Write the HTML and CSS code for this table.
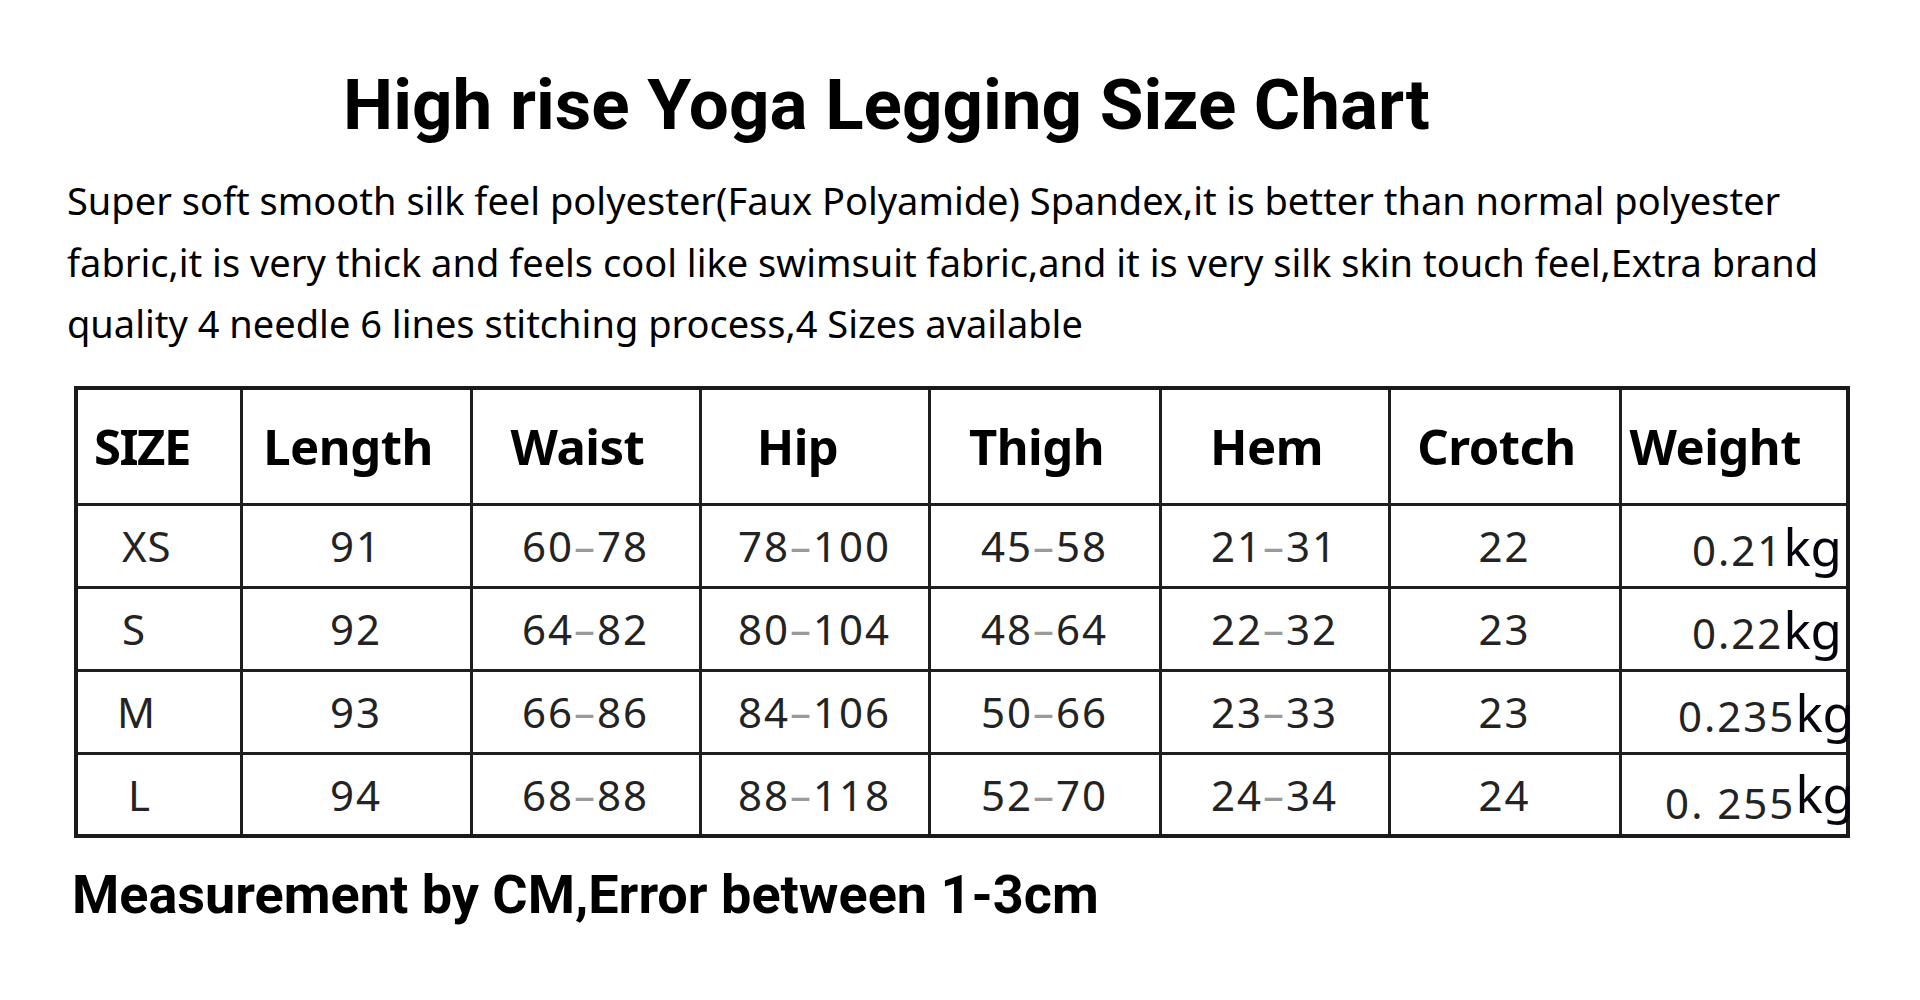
FILE: index.html
```html
<!DOCTYPE html>
<html lang="en">
<head>
<meta charset="utf-8">
<title>High rise Yoga Legging Size Chart</title>
<link rel="stylesheet" href="styles.css">
</head>
<body>
<main class="page">
  <h1 class="title">High rise Yoga Legging Size Chart</h1>
  <p class="desc">Super soft smooth silk feel polyester(Faux Polyamide) Spandex,it is better than normal polyester fabric,it is very thick and feels cool like swimsuit fabric,and it is very silk skin touch feel,Extra brand quality 4 needle 6 lines stitching process,4 Sizes available</p>
  <table class="chart">
    <colgroup>
      <col class="c-size"><col class="c-len"><col class="c-w1"><col class="c-w2"><col class="c-w3"><col class="c-w4"><col class="c-w5"><col class="c-w6">
    </colgroup>
    <thead>
      <tr class="head">
        <th class="h-size">SIZE</th>
        <th>Length</th>
        <th>Waist</th>
        <th class="h-hip">Hip</th>
        <th>Thigh</th>
        <th>Hem</th>
        <th>Crotch</th>
        <th class="h-weight">Weight</th>
      </tr>
    </thead>
    <tbody>
      <tr class="row">
        <td class="sz">XS</td>
        <td>91</td>
        <td>60<span class="d">–</span>78</td>
        <td>78<span class="d">–</span>100</td>
        <td>45<span class="d">–</span>58</td>
        <td>21<span class="d">–</span>31</td>
        <td>22</td>
        <td class="wt">0.21<span class="kg">kg</span></td>
      </tr>
      <tr class="row r2">
        <td class="sz">S</td>
        <td>92</td>
        <td>64<span class="d">–</span>82</td>
        <td>80<span class="d">–</span>104</td>
        <td>48<span class="d">–</span>64</td>
        <td>22<span class="d">–</span>32</td>
        <td>23</td>
        <td class="wt">0.22<span class="kg">kg</span></td>
      </tr>
      <tr class="row">
        <td class="sz sz-m">M</td>
        <td>93</td>
        <td>66<span class="d">–</span>86</td>
        <td>84<span class="d">–</span>106</td>
        <td>50<span class="d">–</span>66</td>
        <td>23<span class="d">–</span>33</td>
        <td>23</td>
        <td class="wt">0.235<span class="kg kg-over">kg</span></td>
      </tr>
      <tr class="row r4">
        <td class="sz sz-l">L</td>
        <td>94</td>
        <td>68<span class="d">–</span>88</td>
        <td>88<span class="d">–</span>118</td>
        <td>52<span class="d">–</span>70</td>
        <td>24<span class="d">–</span>34</td>
        <td>24</td>
        <td class="wt">0. 255<span class="kg kg-over kg-up">kg</span></td>
      </tr>
    </tbody>
  </table>
  <p class="note">Measurement by CM,Error between 1-3cm</p>
</main>
</body>
</html>
```
FILE: styles.css
```css
html, body {
  margin: 0;
  padding: 0;
  background: #ffffff;
}

.page {
  width: 1920px;
  height: 1000px;
  overflow: hidden;
  color: #000;
}

.title {
  margin: 63px 0 0 0;
  padding-left: 343px;
  font-family: Roboto, "Noto Sans", sans-serif;
  font-weight: 700;
  font-size: 71px;
  line-height: 84px;
  letter-spacing: 0;
  color: #000;
}

.desc {
  margin: 23px 0 0 67px;
  width: 1770px;
  font-family: "Noto Sans", sans-serif;
  font-size: 38px;
  line-height: 61.5px;
  color: #000;
}

.chart {
  margin: 31px 0 0 74px;
  width: 1776px;
  table-layout: fixed;
  border-collapse: collapse;
  border: 4px solid #1a1a1a;
  font-family: "Noto Sans", sans-serif;
}

.c-size { width: 165px; }
.c-len  { width: 230px; }
.c-w1   { width: 229px; }
.c-w2   { width: 229px; }
.c-w3   { width: 231px; }
.c-w4   { width: 229px; }
.c-w5   { width: 231px; }
.c-w6   { width: 228px; }

.chart th,
.chart td {
  border: 3px solid #1f1f1f;
  padding: 0;
  vertical-align: middle;
}

.head th {
  height: 113px;
  font-weight: 700;
  font-size: 49px;
  letter-spacing: -0.5px;
  color: #000;
  text-align: center;
  padding-right: 16px;
}

.head .h-size {
  text-align: left;
  padding-left: 16px;
  padding-right: 0;
  letter-spacing: -1.5px;
}

.head .h-hip {
  padding-right: 34px;
}

.head .h-weight {
  text-align: left;
  padding-left: 8px;
  padding-right: 0;
}

.row td {
  height: 80px;
  font-size: 42px;
  letter-spacing: 2px;
  color: #232323;
  text-align: center;
}

.row.r4 td {
  height: 79px;
}

.row .sz {
  text-align: left;
  padding-left: 44px;
  letter-spacing: 1px;
}

.row .sz-m {
  padding-left: 39px;
}

.row .sz-l {
  padding-left: 50px;
}

.d {
  color: #9a9a9a;
  letter-spacing: 2px;
}

.row .wt {
  text-align: right;
  padding-right: 4px;
}

.kg {
  font-size: 51px;
  letter-spacing: 0;
  color: #05050f;
  margin-left: 0;
}

.kg-over {
  margin-right: -12px;
}

.kg-up {
  vertical-align: 6px;
}

.note {
  margin: 25px 0 0 72px;
  font-family: Roboto, "Noto Sans", sans-serif;
  font-weight: 700;
  font-size: 54px;
  line-height: 64px;
  color: #000;
}
```
